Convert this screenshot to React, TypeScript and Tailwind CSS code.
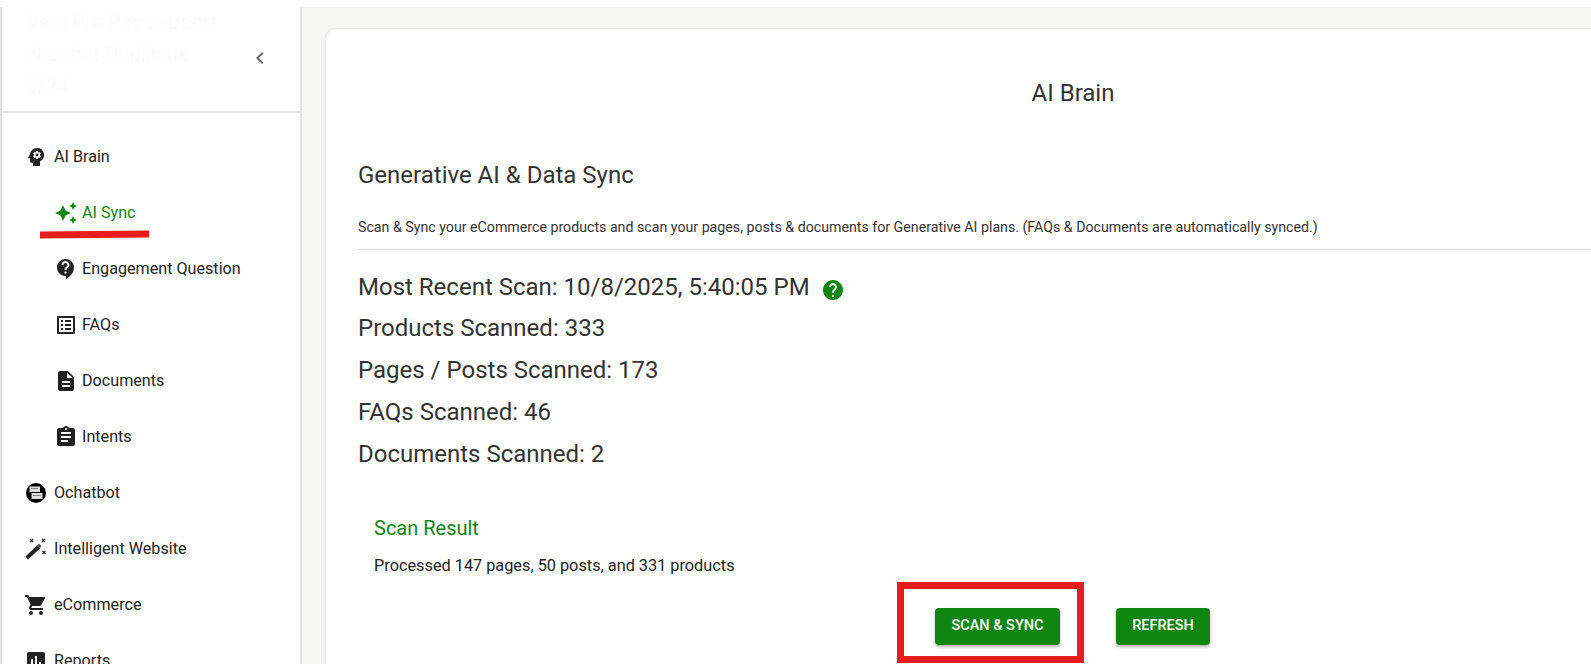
import React from "react";
import {
  MdAssessment,
  MdAssignment,
  MdAutoAwesome,
  MdChevronLeft,
  MdContactSupport,
  MdDescription,
  MdHelp,
  MdListAlt,
  MdPsychology,
  MdShoppingCart,
} from "react-icons/md";

const OchatbotIcon = () => (
  <svg viewBox="0 0 20 20" className="ml-[2px] w-5 h-5">
    <circle cx="10" cy="10" r="10" fill="#000" />
    <rect x="3.5" y="3.5" width="10.5" height="5.5" fill="#ddd" />
    <rect x="5.5" y="10" width="11" height="6" fill="#ddd" />
    <rect x="5" y="5" width="7" height="1" fill="#888" />
    <rect x="7" y="12" width="8" height="1" fill="#888" />
  </svg>
);

const WandIcon = () => (
  <svg viewBox="0 0 22 22" className="ml-[1px] w-[22px] h-[22px]" fill="#222">
    <path d="M0.5 18.5 12.5 7 15.5 10 3 21.5Z" />
    <path d="M11.5 8 14 5.5 16.5 8 14.5 10.5Z" fill="#555" />
    <path
      d="M5 1 8 4M8 1 5 4M17 1 20 4M20 1 17 4M17.5 13 20.5 16M20.5 13 17.5 16"
      stroke="#333"
      strokeWidth="1.4"
    />
  </svg>
);

const subItems = [
  { label: "AI Sync", icon: <MdAutoAwesome size={24} />, active: true },
  { label: "Engagement Question", icon: <MdContactSupport size={24} /> },
  { label: "FAQs", icon: <MdListAlt size={24} /> },
  { label: "Documents", icon: <MdDescription size={24} /> },
  { label: "Intents", icon: <MdAssignment size={24} /> },
];

const topItems = [
  { label: "Ochatbot", icon: <OchatbotIcon /> },
  { label: "Intelligent Website", icon: <WandIcon /> },
  { label: "eCommerce", icon: <MdShoppingCart size={24} /> },
  { label: "Reports", icon: <MdAssessment size={24} /> },
];

const stats = [
  "Products Scanned: 333",
  "Pages / Posts Scanned: 173",
  "FAQs Scanned: 46",
  "Documents Scanned: 2",
];

const App: React.FC = () => {
  return (
    <div className="relative h-[664px] w-[1591px] overflow-hidden bg-white pt-[7px] font-['Roboto',sans-serif] text-[#222]">
      <div className="flex h-[657px]">
        <aside className="w-[302px] shrink-0 overflow-hidden border-l-2 border-r-2 border-[#e2e2e2] bg-white">
          <div className="flex h-[106px] items-center justify-between border-b-2 border-[#e2e2e2] pl-6 pr-[28px]">
            <div className="-mt-[11px] w-[200px] text-[20.25px] leading-[32px] text-[#fcfcfc]">
              Veto Pro Pac support chat bot Duplicate 3/24
            </div>
            <MdChevronLeft size={24} className="-mt-[3px] text-[#666]" />
          </div>
          <nav className="pt-[16px] text-[16.15px]">
            <div className="flex h-14 items-center pl-[22px]">
              <span className="flex w-[30px] items-center">
                <MdPsychology size={24} />
              </span>
              AI Brain
            </div>
            {subItems.map((item) => (
              <div
                key={item.label}
                className={`flex h-14 items-center pl-[52px] ${
                  item.active ? "text-[#0f860f]" : ""
                }`}
              >
                <span className="flex w-[28px] items-center">{item.icon}</span>
                {item.label}
              </div>
            ))}
            {topItems.map((item) => (
              <div key={item.label} className="flex h-14 items-center pl-[22px]">
                <span className="flex w-[30px] items-center">{item.icon}</span>
                {item.label}
              </div>
            ))}
          </nav>
        </aside>
        <main className="flex-1 bg-[#f6f6f5] pl-[24px] pt-[22px]">
          <div className="h-[800px] w-[1494px] rounded-t-[10px] bg-white pt-[49px] shadow-[0_0_3px_rgba(0,0,0,0.15)]">
            <h1 className="text-center text-[24px] leading-[30px] text-[#333]">AI Brain</h1>
            <div className="pl-[32px]">
              <h2 className="mt-[50px] text-[24px] leading-[34px] text-[#333]">
                Generative AI &amp; Data Sync
              </h2>
              <p className="mt-[25px] text-[14.2px] leading-[20px] text-[#333]">
                Scan &amp; Sync your eCommerce products and scan your pages, posts &amp; documents for
                Generative AI plans. (FAQs &amp; Documents are automatically synced.)
              </p>
              <hr className="mt-[12px] border-[#ddd]" />
              <div className="mt-[18px] text-[24px] leading-[41.9px] text-[#333]">
                <div className="flex h-[40px] items-center">
                  Most Recent Scan: 10/8/2025, 5:40:05 PM
                  <MdHelp size={24} className="ml-[11px] mt-[4px] text-[#0f860f]" />
                </div>
                {stats.map((stat) => (
                  <div key={stat}>{stat}</div>
                ))}
              </div>
              <div className="mt-[37px] pl-4">
                <div className="text-[20px] leading-[30px] text-[#0f860f]">Scan Result</div>
                <div className="mt-[11px] text-[16.3px] leading-[24px] text-[#222]">
                  Processed 147 pages, 50 posts, and 331 products
                </div>
              </div>
              <div className="ml-[577px] mt-[30px] flex gap-[56px]">
                <button className="h-[37px] w-[125px] rounded bg-[#0f860f] text-[14.5px] font-medium text-white shadow-[0_2px_3px_rgba(0,0,0,0.3)]">
                  SCAN &amp; SYNC
                </button>
                <button className="h-[37px] w-[94px] rounded bg-[#0f860f] text-[14.5px] font-medium text-white shadow-[0_2px_3px_rgba(0,0,0,0.3)]">
                  REFRESH
                </button>
              </div>
            </div>
          </div>
        </main>
      </div>
      {/* red annotations drawn on top of the screenshot */}
      <div className="absolute left-[40px] top-[231px] h-[7px] w-[109px] -rotate-[0.5deg] bg-[#e71d1d]" />
      <div className="absolute left-[897px] top-[582px] h-[81px] w-[187px] border-[7px] border-[#e71d1d]" />
    </div>
  );
};

export default App;
